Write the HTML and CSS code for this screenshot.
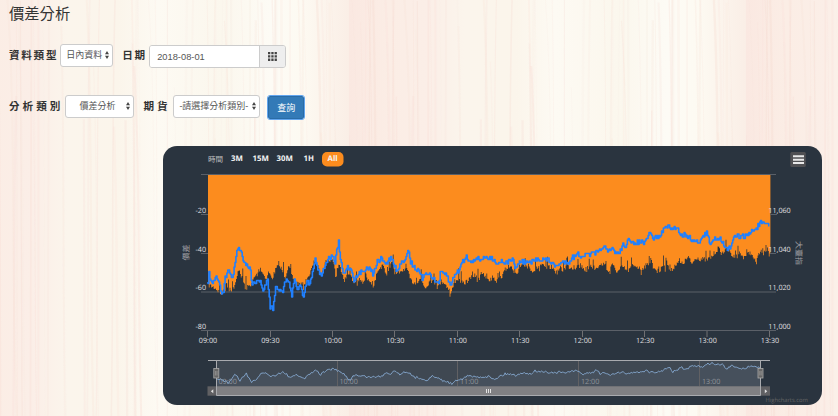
FILE: index.html
```
<!DOCTYPE html>
<html lang="zh-Hant">

<head>
  <meta charset="utf-8">
  <title>價差分析</title>
  <link rel="stylesheet" href="styles.css">
</head>

<body>

  <svg class="wood" width="838" height="416" aria-hidden="true">
    <defs>
      <linearGradient id="woodBase">
        <stop offset="0" stop-color="#fae8e1"/>
        <stop offset=".1" stop-color="#fbede5"/>
        <stop offset=".2" stop-color="#fbeee7"/>
        <stop offset=".29" stop-color="#fbf5ec"/>
        <stop offset=".42" stop-color="#fbf5eb"/>
        <stop offset=".52" stop-color="#fdfaf3"/>
        <stop offset=".68" stop-color="#fbf7ed"/>
        <stop offset=".8" stop-color="#fdfbf5"/>
        <stop offset=".88" stop-color="#fdfaf2"/>
        <stop offset="1" stop-color="#faeee6"/>
      </linearGradient>
      <pattern id="woodTile" x="-48" y="0" width="397" height="416" patternUnits="userSpaceOnUse">
        <rect width="397" height="416" fill="url(#woodBase)"/>
        <g id="grain" class="grain"></g>
      </pattern>
    </defs>
    <rect width="838" height="416" fill="url(#woodTile)"/>
  </svg>

  <div class="page">
    <h2>價差分析</h2>

    <form id="queryForm">
      <div class="form-row">
        <label class="tight">資料類型</label>
        <div class="select type-select">
          <span>日內資料</span>
          <svg class="arrows" viewBox="0 0 4 8"><path d="M0 3.2L2 0l2 3.2zM0 4.8h4L2 8z"/></svg>
        </div>
        <label class="date-label">日期</label>
        <div class="date-group">
          <div class="date-input">2018-08-01</div>
          <div class="addon">
            <svg viewBox="0 0 9 9" width="9" height="9"><path d="M0 0h2.3v2.3H0zM3.3 0h2.3v2.3H3.3zM6.6 0h2.3v2.3H6.6zM0 3.3h2.3v2.3H0zM3.3 3.3h2.3v2.3H3.3zM6.6 3.3h2.3v2.3H6.6zM0 6.6h2.3v2.3H0zM3.3 6.6h2.3v2.3H3.3zM6.6 6.6h2.3v2.3H6.6z"/></svg>
          </div>
        </div>
      </div>

      <div class="form-row second">
        <label>分析類別</label>
        <div class="select analysis-select">
          <span>價差分析</span>
          <svg class="arrows" viewBox="0 0 4 8"><path d="M0 3.2L2 0l2 3.2zM0 4.8h4L2 8z"/></svg>
        </div>
        <label class="future-label">期貨</label>
        <div class="select future-select">
          <span>-請選擇分析類別-</span>
          <svg class="arrows" viewBox="0 0 4 8"><path d="M0 3.2L2 0l2 3.2zM0 4.8h4L2 8z"/></svg>
        </div>
        <button type="button" class="button">查詢</button>
      </div>
    </form>

    <div class="chart">
      <svg viewBox="163 146 659 259" width="659" height="259">
        <!-- range selector -->
        <text x="208" y="162" class="range-title" textLength="15">時間</text>
        <rect x="322" y="152" width="21.5" height="14.5" rx="5" fill="#fc8c1e"/>
        <g class="range">
          <text x="231" y="161.3">3M</text>
          <text x="252.5" y="161.3">15M</text>
          <text x="276.5" y="161.3">30M</text>
          <text x="303.5" y="161.3">1H</text>
          <text x="327.5" y="161.3">All</text>
        </g>

        <rect x="790.3" y="152" width="15.5" height="15" rx="1.5" fill="#505053"/>
        <path d="M793 156.3h11M793 159.7h11M793 163.1h11" stroke="#e8e8e8" stroke-width="2"/>

        <!-- plot -->
        <path class="grid" d="M201 174.5h575M201 214.5h7M770 214.5h7M201 253.5h7M201 292h575M201 330.5h575"/>
        <path id="area" fill="#fc8c1e"/>
        <path class="grid" d="M770 214.5h6M770 253.5h6"/>
        <path id="price" class="price"/>
        <path class="tick" d="M207.5 331v6M270.5 331v6M332.5 331v6M394.5 331v6M457.5 331v6M519.5 331v6M582.5 331v6M644.5 331v6M707 331v6M769.5 331v6"/>

        <g class="labels" text-anchor="end">
          <text x="206" y="212.5">-20</text>
          <text x="206" y="251.5">-40</text>
          <text x="206" y="290.3">-60</text>
          <text x="206" y="329.2">-80</text>
        </g>
        <g class="labels">
          <text x="768.3" y="212.5">11,060</text>
          <text x="768.3" y="251.5">11,040</text>
          <text x="768.3" y="290.3">11,020</text>
          <text x="768.3" y="329.2">11,000</text>
        </g>
        <g class="labels" text-anchor="middle">
          <text x="208" y="342.5">09:00</text>
          <text x="270.4" y="342.5">09:30</text>
          <text x="332.9" y="342.5">10:00</text>
          <text x="395.3" y="342.5">10:30</text>
          <text x="457.8" y="342.5">11:00</text>
          <text x="520.2" y="342.5">11:30</text>
          <text x="582.7" y="342.5">12:00</text>
          <text x="645.1" y="342.5">12:30</text>
          <text x="707.6" y="342.5">13:00</text>
          <text x="770" y="342.5">13:30</text>
        </g>
        <text class="axis-title" transform="translate(188.5 252.5) rotate(-90)" text-anchor="middle">價差</text>
        <text class="axis-title" transform="translate(796 253) rotate(90)" text-anchor="middle">大臺指</text>

        <!-- navigator -->
        <path id="navArea" fill="#7798bf" fill-opacity=".09"/>
        <path class="nav-grid" d="M337.5 361v25M457.5 361v25M578.5 361v25M699.5 361v25"/>
        <g class="nav-labels">
          <text x="218.5" y="383.5">09:00</text>
          <text x="339.5" y="383.5">10:00</text>
          <text x="460" y="383.5">11:00</text>
          <text x="581" y="383.5">12:00</text>
          <text x="702" y="383.5">13:00</text>
        </g>
        <rect x="216.5" y="361" width="544" height="25" fill="#fff" fill-opacity=".1"/>
        <path id="nav" class="nav"/>
        <rect x="207.5" y="386.3" width="562.5" height="9.4" fill="#606063"/>
        <rect x="216.5" y="386.3" width="544" height="9.4" fill="#808083"/>
        <path d="M208 360.5h562M216.5 360.5v35h544v-35" fill="none" stroke="#a9abaf"/>
        <path d="M213.3 389.2v4l-2.5-2zM764.8 389.2v4l2.5-2z" fill="#ddd"/>
        <path d="M486.5 389v4M488.5 389v4M490.5 389v4" stroke="#eee" stroke-width=".9"/>
        <g fill="#666" stroke="#aaa" stroke-width=".8">
          <rect x="213.8" y="368.5" width="5" height="9.5"/>
          <rect x="758" y="368.5" width="5" height="9.5"/>
        </g>
        <path d="M215.6 371v4.5M217 371v4.5M759.8 371v4.5M761.2 371v4.5" stroke="#aaa" stroke-width=".6"/>
        <text x="765.5" y="401.8" class="credits">Highcharts.com</text>
      </svg>
    </div>
  </div>

  <script src="chart.js"></script>
</body>

</html>
```
FILE: styles.css
```
body {
  margin: 0;
  height: 416px;
  overflow: hidden;
  background-color: #fbf5ec;
  font-family: "Liberation Sans", "Noto Sans CJK TC", sans-serif;
  color: #333;
}

.wood {
  position: absolute;
  top: 0;
  left: 0;
  z-index: -1;
}

.grain path {
  fill: none;
  stroke: #f5d5cc;
}

.page { padding: 4px 0 0 9px;}

h2 {
  margin: 0;
  height: 20px;
  line-height: 20px;
  font-size: 15.3px;
  font-weight: 400;
}

.form-row {
  display: flex;
  align-items: center;
  height: 24px;
  margin-top: 19px;
}

.form-row.second { margin-top: 27px;}

label {
  font-size: 10.6px;
  line-height: 22px;
  font-weight: 700;
  letter-spacing: 3px;
  white-space: nowrap;
}

label.tight, .date-label { letter-spacing: 1.7px;}

.select {
  box-sizing: border-box;
  display: flex;
  align-items: center;
  justify-content: space-between;
  height: 23px;
  border: 1px solid #ccc;
  border-radius: 3px;
  background-color: #fff;
  font-size: 9px;
  line-height: 20px;
  color: #555;
  white-space: nowrap;
}

.arrows {
  width: 4px;
  height: 8px;
  fill: #444;
}

.type-select {
  width: 53px;
  margin: 0 9px 0 2px;
  padding: 0 3px 0 5px;
}

.date-label { width: 27px;}

.date-group {
  box-sizing: border-box;
  display: flex;
  width: 137px;
  height: 23px;
  margin-top: 2px;
  border: 1px solid #ccc;
  border-radius: 3px;
  overflow: hidden;
}

.date-input {
  flex: 1;
  padding-left: 7px;
  background-color: #fff;
  font-size: 9.3px;
  line-height: 22px;
  color: #555;
}

.addon {
  display: flex;
  align-items: center;
  justify-content: center;
  width: 25px;
  border-left: 1px solid #ccc;
  background-color: #eee;
  fill: #444;
}

.analysis-select {
  width: 69px;
  margin: 0 9px 0 2px;
  padding: 0 3px 0 13px;
}

.future-label { width: 30px;}

.future-select {
  width: 87px;
  padding: 0 3px 0 5px;
}

.button {
  width: 36px;
  height: 23px;
  margin: 3px 0 0 8px;
  padding: 0;
  border: 1px solid #2a6ca6;
  border-radius: 2px;
  outline: 1px solid #62a5ee;
  background-color: #337ab7;
  color: #fff;
  font-family: inherit;
  font-size: 9px;
  line-height: 20px;
}

.chart {
  width: 659px;
  height: 259px;
  margin: 28px 0 0 154px;
  border-radius: 14px;
  background-color: #2a343f;
  overflow: hidden;
}

.chart svg {
  display: block;
  font-family: "Open Sans", "Noto Sans CJK TC", sans-serif;
  text-rendering: geometricPrecision;
}

.range-title {
  font-size: 7.5px;
  fill: #c0c0c0;
}

.range {
  font-size: 7.8px;
  font-weight: 700;
  fill: #f4f4f4;
}

.labels {
  font-size: 7.2px;
  fill: #e0e0e3;
}

.axis-title {
  font-size: 8px;
  fill: #a0a0a3;
}

.grid {
  fill: none;
  stroke: #5b6068;
}

.tick {
  stroke: #707073;
}

.price {
  fill: none;
  stroke: #2080ff;
  stroke-width: 1.6;
  stroke-linejoin: round;
}

.nav {
  fill: none;
  stroke: #87aad2;
  stroke-width: .9;
}

.nav-grid { stroke: #505053;}

.nav-labels {
  font-size: 7.2px;
  fill: #858a91;
}

.credits {
  font-size: 5.8px;
  fill: #666;
}
```
FILE: chart.js
```
// [x, y] pairs, y grows downwards
const pricePoints = [
  208,285, 209,272, 211.5,285, 215,278, 218,280, 221,292.5, 223.5,290, 225,277, 228.5,271, 232.5,278,
  235,263, 236.5,250, 239.5,248, 241.5,255, 245,263, 250,269, 251.5,282, 257,282, 260,280, 263,290,
  267.5,280, 270,308, 271.5,303, 273,310, 275.5,287, 280,290, 283,290, 286,278, 290,286, 291.5,297,
  294,280, 297.5,290, 300,283, 303,297, 306,283, 310,283, 313,267, 315,260, 318.5,270, 321.5,275,
  325,265, 327,260, 332,256, 335,262, 338.3,241, 340.6,262, 343.5,275, 346.5,267, 351.5,270, 354,280,
  358.5,275, 363,270, 370,267, 372.5,275, 376.5,263, 381.5,258, 386.5,265, 390.5,257, 396.5,271,
  401.5,263, 406,257, 408,247, 410,262, 415,268, 419,273, 422.5,280, 426,272, 430,274, 435,282,
  438.5,283, 440.5,273, 446.5,275, 450.5,287, 454,274, 458,272, 461.5,263, 466.5,257, 470,262,
  475,258, 480,260, 483,257, 488,259, 493,258, 497,264, 501,260, 505,263, 512,259, 515.5,268,
  520.5,261, 530,263, 538,259, 548,260, 555,266, 561,263, 568,262, 576.5,254, 582,256, 590,254,
  598,253, 602,247, 605,248, 608,252.5, 612,248.5, 618,254, 623,245, 626,245, 627.5,239, 630,244,
  640,242, 645,243, 649.5,233.5, 653,238, 660,236, 666,225, 670,229, 677,227, 681,235, 687,235,
  695,242, 700,240, 706.5,233, 710.5,246, 713,238, 720,238, 727,250, 731,247, 735,236, 743,237,
  750,233, 757,227, 761.3,221.5, 765,226, 767.5,223, 769.5,230
]

const areaPoints = [
  208,285, 215,288, 221,294, 226.5,283, 231.5,290, 235,285, 238.5,268, 241.5,278, 246,288, 250,285,
  254,278, 260,268, 265,278, 268.5,272, 271.5,279, 276.5,267, 280.5,268, 285,277, 288,265, 291.5,277,
  296.5,283, 303,285, 308,278, 315,259, 320,275, 326.5,260, 333,260, 335,273, 338.5,265, 341.5,271,
  344,280, 349.5,272, 352.5,283, 358.5,280, 363,283, 368,278, 372.5,284, 376.5,275, 382.5,266,
  386.5,276, 391,262, 396.5,273, 401.5,273, 405,264, 410,280, 415,283, 420.5,279, 425,288, 430,280,
  435,283, 437.5,288, 441.5,280, 448,288, 450.5,294, 454,283, 457.5,278, 463,284, 468,280, 476.5,274,
  480,280, 483,275, 488,281, 493,277, 496.5,282, 499,276, 501.5,277, 503.5,268, 507.5,271, 512,267,
  516,276, 520,267, 526.5,265, 533,271, 540,265, 546.5,268, 551.5,267, 556,273, 560,268, 563,271,
  566,266, 573,268, 580,265, 585,270, 590.5,264, 594,270, 600,265, 605,263, 608,273, 611,264,
  617,272, 622.5,267, 627,271, 635,265, 640,269, 645,266, 651,261, 656.5,271, 661,266, 666.5,263,
  670,272, 677,262, 682,264, 688,257, 691,264, 696.5,257, 700,259, 706.5,260, 711,257, 715,252,
  718,248, 723,252, 727,249, 733,257, 738,252, 743,257, 750,252, 755,262, 760,252, 765,249, 770,254
]

const navPoints = [
  216.5,379, 220,379, 225,381, 228,383, 231.5,379, 235,374, 240,381, 246,373, 251.5,382, 257,380,
  261.5,373, 266.5,372.5, 270,377, 275,375, 283,372, 291.5,378, 296,375, 305,378.5, 311.5,372.5,
  316.5,370.5, 320.5,374.5, 326.5,370, 332,369, 337,370.5, 345,375, 350,381, 353,375, 360,376,
  371.5,377, 381.5,376.5, 386.5,372, 390,374, 394,370.5, 400,374, 407,371, 413,377, 420,378,
  426.5,380, 433,376, 441.5,380, 448,382, 451.5,384, 455,380, 461.5,379, 468,376, 476.5,377,
  488,376.5, 495,379, 500,376, 505,374, 513,374, 516.5,376, 523,372, 530,374, 535,371, 550,372.5,
  565,372.5, 577,371, 582,374, 593,372.5, 597.5,370, 600,374.5, 603,372, 608,375, 618,373, 628,373,
  640,372, 645,370.5, 655,373.5, 660,371, 670,368, 673,372, 681.5,367.5, 685,370, 691.5,366.5,
  703,366.5, 711.5,362.5, 714,365, 722,364.5, 726.5,369, 731.5,366, 738,367.5, 745,368.5, 751.5,365.5, 760,368
]

let seed = 7
const random = () => {
  seed = (seed * 16807) % 2147483647
  return seed / 2147483647
}

// walk between the points in small steps with some noise
const walk = (points, step, noise) => {
  const result = []
  let i = 0
  for (let x = points[0]; x <= points[points.length - 2]; x += step) {
    while (points[i + 2] < x) i += 2
    const t = (x - points[i]) / (points[i + 2] - points[i])
    const y = points[i + 1] + (points[i + 3] - points[i + 1]) * t
    result.push([x, y + (random() - .5) * noise])
  }
  return result
}

const toPath = (list) => 'M' + list.map(([x, y]) => x.toFixed(1) + ' ' + y.toFixed(1)).join('L')
const setPath = (id, d) => document.getElementById(id).setAttribute('d', d)

// stepped columns with random spikes
let area = 'M208 175'
for (const [x, y] of walk(areaPoints, .8, 5)) {
  const spike = random() > .8 ? (random() - .65) * 16 : 0
  area += 'V' + (y + spike).toFixed(1) + 'H' + (x + .8).toFixed(1)
}
setPath('area', area + 'V175z')

let price = 'M208 282'
for (const [x, y] of walk(pricePoints, .9, 5)) {
  price += 'H' + x.toFixed(1) + 'V' + (Math.round(y / 1.5) * 1.5).toFixed(1)
}
setPath('price', price)

const nav = toPath(walk(navPoints, 1.3, 2.4))
setPath('nav', nav)
setPath('navArea', nav + 'L760 386H216.5z')

// wood grain
let grain = ''
for (let i = 0; i < 75; i++) {
  const x = random() * 390
  const bend = (random() - .3) * 14
  const top = random() > .6 ? random() * 200 - 60 : -5
  const width = .7 + random() * 1.8
  const opacity = .07 + random() * .2
  grain += `<path d="M${x} ${top}C${x + bend} ${top + 130} ${x + bend / 3} 270 ${x + bend} 420" stroke-width="${width}" opacity="${opacity}"/>`
}
document.getElementById('grain').innerHTML = grain
```
